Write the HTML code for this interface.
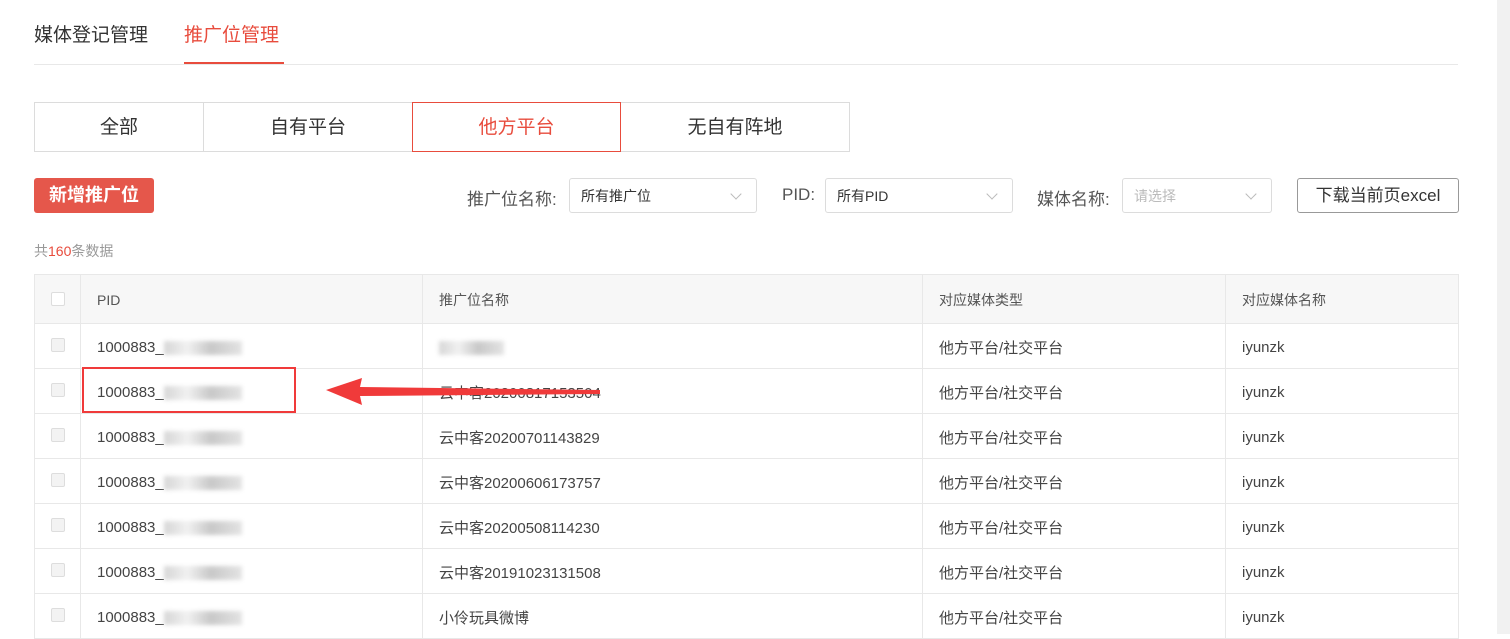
<!DOCTYPE html>
<html><head><meta charset="utf-8"><style>
*{box-sizing:border-box;margin:0;padding:0}
body{width:1510px;height:634px;overflow:hidden;background:#fff;font-family:"Liberation Sans","Noto Sans CJK SC",sans-serif;color:#333;position:relative}
.a{position:absolute}
.sb{position:absolute;right:0;top:0;width:13px;height:634px;background:#f1f1f1}
.tab{position:absolute;top:102px;height:50px;border:1px solid #dcdcdc;font-size:19px;line-height:50px;text-align:center;color:#333}
.sel{position:absolute;top:178px;height:35px;border:1px solid #dcdcdc;border-radius:3px;font-size:14px;line-height:34px;padding-left:11px;color:#333}
.sel:after{content:"";position:absolute;right:16px;top:11px;width:7px;height:7px;border-right:1px solid #bbb;border-bottom:1px solid #bbb;transform:rotate(45deg)}
.lbl{position:absolute;top:185px;font-size:17px;color:#555}
table{position:absolute;left:34px;top:274px;width:1425px;border-collapse:collapse;font-size:15px;color:#444}
td{border:1px solid #e8e8e8;height:45px;padding-left:16px;padding-top:2px;vertical-align:middle}
tr.h td{background:#f7f7f7;height:49px;font-size:14px;color:#555}
.cb{display:inline-block;width:14px;height:14px;border:1px solid #ddd;border-radius:2px;background:#f3f3f3;margin-left:0}
.bl{display:inline-block;width:78px;height:14px;background:linear-gradient(90deg,#ccc,#eee 30%,#bbb 60%,#ddd);filter:blur(2px);vertical-align:middle;opacity:.8}
</style></head><body>
<div class="sb"></div>
<div class="a" style="left:34px;top:20px;font-size:19px;color:#333">媒体登记管理</div>
<div class="a" style="left:184px;top:20px;font-size:19px;color:#e84c3d">推广位管理</div>
<div class="a" style="left:34px;top:64px;width:1424px;height:1px;background:#e8e8e8"></div>
<div class="a" style="left:184px;top:62px;width:100px;height:2px;background:#e84c3d"></div>
<div class="tab" style="left:34px;width:170px">全部</div>
<div class="tab" style="left:203px;width:210px">自有平台</div>
<div class="tab" style="left:620px;width:230px">无自有阵地</div>
<div class="tab" style="left:412px;width:209px;border-color:#e84c3d;color:#e84c3d">他方平台</div>
<div class="a" style="left:34px;top:178px;width:120px;height:35px;background:#e5574b;border-radius:3px;color:#fff;font-size:18px;font-weight:bold;line-height:35px;text-align:center">新增推广位</div>
<div class="lbl" style="left:467px">推广位名称:</div>
<div class="sel" style="left:569px;width:188px">所有推广位</div>
<div class="lbl" style="left:782px">PID:</div>
<div class="sel" style="left:825px;width:188px">所有PID</div>
<div class="lbl" style="left:1037px">媒体名称:</div>
<div class="sel" style="left:1122px;width:150px;color:#bbb">请选择</div>
<div class="a" style="left:1297px;top:178px;width:162px;height:35px;border:1px solid #999;border-radius:3px;font-size:17px;line-height:34px;text-align:center;color:#333">下载当前页excel</div>
<div class="a" style="left:34px;top:241px;font-size:14px;color:#999">共<span style="color:#e84c3d">160</span>条数据</div>
<table>
<tr class="h"><td style="width:46px"><span class="cb" style="background:#fff"></span></td><td style="width:342px">PID</td><td style="width:500px">推广位名称</td><td style="width:303px">对应媒体类型</td><td>对应媒体名称</td></tr>
<tr><td><span class="cb"></span></td><td>1000883_<span class="bl"></span></td><td><span class="bl" style="width:65px"></span></td><td>他方平台/社交平台</td><td>iyunzk</td></tr>
<tr><td><span class="cb"></span></td><td>1000883_<span class="bl"></span></td><td>云中客20200817153504</td><td>他方平台/社交平台</td><td>iyunzk</td></tr>
<tr><td><span class="cb"></span></td><td>1000883_<span class="bl"></span></td><td>云中客20200701143829</td><td>他方平台/社交平台</td><td>iyunzk</td></tr>
<tr><td><span class="cb"></span></td><td>1000883_<span class="bl"></span></td><td>云中客20200606173757</td><td>他方平台/社交平台</td><td>iyunzk</td></tr>
<tr><td><span class="cb"></span></td><td>1000883_<span class="bl"></span></td><td>云中客20200508114230</td><td>他方平台/社交平台</td><td>iyunzk</td></tr>
<tr><td><span class="cb"></span></td><td>1000883_<span class="bl"></span></td><td>云中客20191023131508</td><td>他方平台/社交平台</td><td>iyunzk</td></tr>
<tr><td><span class="cb"></span></td><td>1000883_<span class="bl"></span></td><td>小伶玩具微博</td><td>他方平台/社交平台</td><td>iyunzk</td></tr>
</table>
<div class="a" style="left:82px;top:367px;width:214px;height:46px;border:2px solid #f03a3a"></div>
<svg class="a" style="left:320px;top:374px" width="290" height="34"><polygon points="6,16 42,4 40,13 280,16 280,20 40,22 42,31" fill="#f03a3a"/></svg>
</body></html>
